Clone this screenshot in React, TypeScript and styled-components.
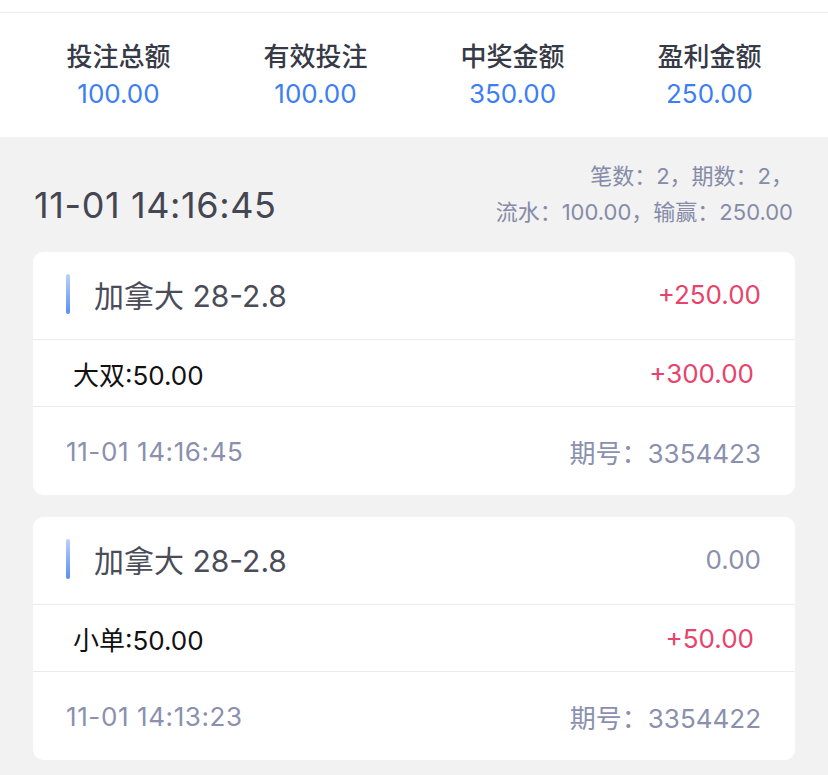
import React from "react";
import styled, { createGlobalStyle } from "styled-components";

interface Bet {
  id: string;
  game: string;
  profit: string;
  pick: string;
  win: string;
  time: string;
  issue: string;
}

const summary = [
  { label: "投注总额", value: "100.00" },
  { label: "有效投注", value: "100.00" },
  { label: "中奖金额", value: "350.00" },
  { label: "盈利金额", value: "250.00" },
];

const bets: Bet[] = [
  {
    id: "1",
    game: "加拿大 28-2.8",
    profit: "+250.00",
    pick: "大双:50.00",
    win: "+300.00",
    time: "11-01 14:16:45",
    issue: "3354423",
  },
  {
    id: "2",
    game: "加拿大 28-2.8",
    profit: "0.00",
    pick: "小单:50.00",
    win: "+50.00",
    time: "11-01 14:13:23",
    issue: "3354422",
  },
];

const GlobalStyle = createGlobalStyle`
  html, body {
    margin: 0;
    padding: 0;
    background: #f2f2f2;
    font-family: Inter, "Noto Sans CJK SC", sans-serif;
  }
`;

const App: React.FC = () => {
  return (
    <Page>
      <GlobalStyle />
      <TopBar />
      <Summary>
        {summary.map((item) => (
          <SummaryItem key={item.label}>
            <SummaryLabel>{item.label}</SummaryLabel>
            <SummaryValue>{item.value}</SummaryValue>
          </SummaryItem>
        ))}
      </Summary>
      <DayHeader>
        <DayDate>11-01 14:16:45</DayDate>
        <DayStats>
          <div>笔数：2，期数：2，</div>
          <div>流水：100.00，输赢：250.00</div>
        </DayStats>
      </DayHeader>
      <CardList>
        {bets.map((bet) => (
          <Card key={bet.id}>
            <CardHead>
              <GameName>{bet.game}</GameName>
              <Amount $zero={bet.profit === "0.00"}>{bet.profit}</Amount>
            </CardHead>
            <PickRow>
              <PickText>{bet.pick}</PickText>
              <Amount $zero={false}>{bet.win}</Amount>
            </PickRow>
            <CardFoot>
              <FootTime>{bet.time}</FootTime>
              <span>期号：{bet.issue}</span>
            </CardFoot>
          </Card>
        ))}
      </CardList>
    </Page>
  );
};

export default App;

const Page = styled.div`
  width: 828px;
  min-height: 775px;
  background: #f2f2f2;
`;

const TopBar = styled.div`
  height: 12px;
  background: #fff;
  border-bottom: 1px solid #ececec;
`;

const Summary = styled.div`
  display: grid;
  grid-template-columns: repeat(4, 1fr);
  padding: 26px 20px 0;
  height: 98px;
  background: #fff;
`;

const SummaryItem = styled.div`
  display: flex;
  flex-direction: column;
  align-items: center;
`;

const SummaryLabel = styled.div`
  font-size: 26px;
  line-height: 36px;
  font-weight: 500;
  color: #363946;
`;

const SummaryValue = styled.div`
  margin-top: 1px;
  font-size: 26px;
  line-height: 36px;
  color: #3d7ef2;
`;

const DayHeader = styled.div`
  display: flex;
  justify-content: space-between;
  align-items: flex-end;
  padding: 25px 35px 26px 34px;
`;

const DayDate = styled.div`
  font-size: 36px;
  line-height: 44px;
  letter-spacing: 0.6px;
  color: #444652;
  margin-bottom: -1px;
`;

const DayStats = styled.div`
  display: flex;
  flex-direction: column;
  align-items: flex-end;
  gap: 8px;
  font-size: 22px;
  line-height: 28px;
  color: #858ba8;
`;

const CardList = styled.div`
  display: flex;
  flex-direction: column;
  gap: 22px;
  padding: 0 33px 15px;
`;

const Card = styled.div`
  background: #fff;
  border-radius: 10px;
  overflow: hidden;
`;

const CardHead = styled.div`
  display: flex;
  justify-content: space-between;
  align-items: center;
  box-sizing: border-box;
  height: 88px;
  padding: 0 34px 3px 33px;
  border-bottom: 1px solid #ebebeb;
`;

const GameName = styled.div`
  display: flex;
  align-items: center;
  font-size: 30px;
  color: #4a4c58;

  &::before {
    content: "";
    width: 4px;
    height: 40px;
    margin-right: 24px;
    border-radius: 2px;
    background: linear-gradient(180deg, #bdd0fb 0%, #5a8ef2 100%);
  }
`;

const Amount = styled.div<{ $zero: boolean }>`
  font-size: 26px;
  color: ${({ $zero }) => ($zero ? "#8b90ad" : "#e8436c")};
`;

const PickRow = styled.div`
  display: flex;
  justify-content: space-between;
  align-items: center;
  height: 66px;
  padding: 0 41px 0 40px;
  border-bottom: 1px solid #ebebeb;
`;

const PickText = styled.div`
  font-size: 26px;
  color: #111;
`;

const CardFoot = styled.div`
  display: flex;
  justify-content: space-between;
  align-items: center;
  height: 88px;
  padding: 0 34px 0 33px;
  font-size: 26px;
  color: #8a90ae;
`;

const FootTime = styled.span`
  letter-spacing: 0.6px;
`;
